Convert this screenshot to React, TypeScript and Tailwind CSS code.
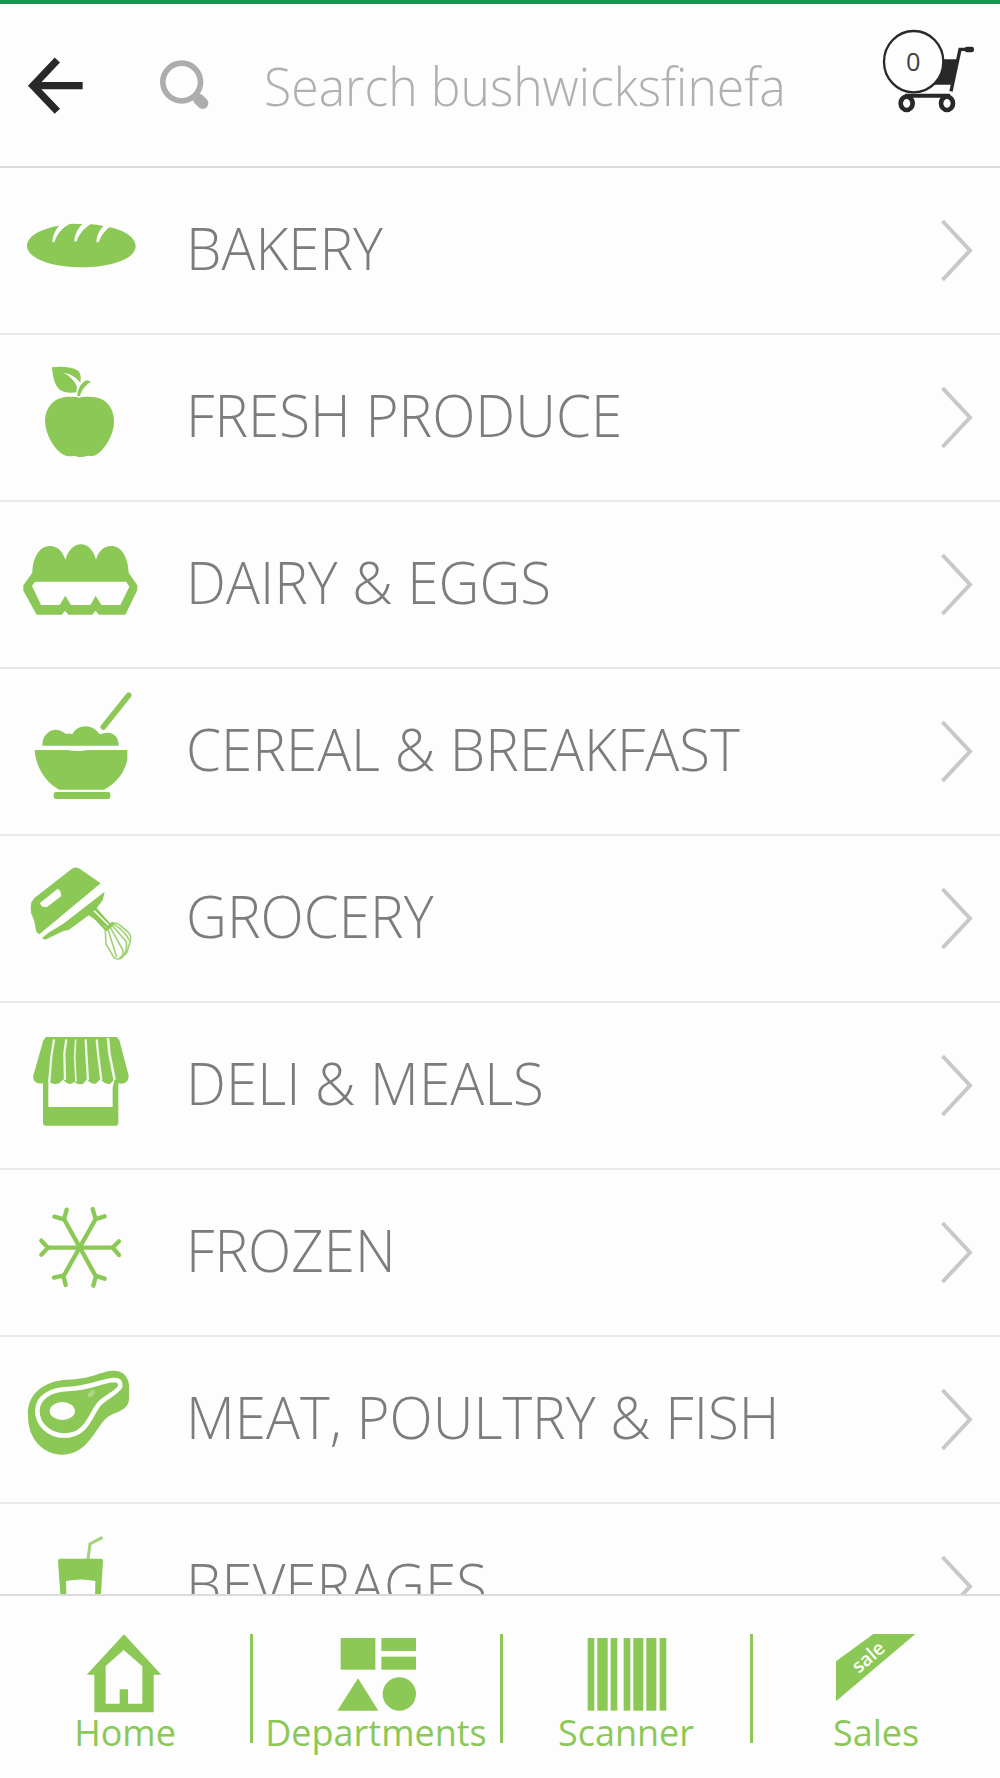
import type { ReactNode } from 'react';

interface Department {
  name: string;
  viewBox: string;
  icon: ReactNode;
}

const departments: Department[] = [
  {
    name: 'BAKERY',
    viewBox: '0 -66 480 495',
    icon: (
      <path
        fill="currentColor"
        d="M81 168C81 140 120 116 178 107C166 119 158 136 157 155Q161 160 165 152C171 132 188 112 209 102Q228 100 247 103C234 114 224 133 223 153Q227 158 231 152C237 132 254 114 271 103Q291 104 310 108C298 121 290 137 289 155Q294 160 298 152C304 136 315 122 328 112C376 121 407 144 407 169C407 206 334 232 244 232C154 232 81 204 81 168Z"
      />
    ),
  },
  {
    name: 'FRESH PRODUCE',
    viewBox: '0 435 480 495',
    icon: (
      <>
        <path
          fill="currentColor"
          d="M156 532C182 528 212 531 231 540C242 547 244 560 241 578C228 562 213 551 190 548C210 558 225 574 231 590L229 607C206 610 186 606 176 596C162 581 158 557 156 532Z"
        />
        <path fill="currentColor" d="M232 618C233 594 247 573 263 571L273 575C257 584 245 599 240 618Z" />
        <path
          fill="currentColor"
          d="M238 623C252 619 284 618 304 627C330 640 343 666 342 697C341 735 314 782 286 796C276 801 268 796 260 798C249 802 234 802 222 797C212 799 203 800 192 795C163 779 137 735 135 695C135 661 151 638 174 627C194 618 222 620 238 623Z"
        />
      </>
    ),
  },
  {
    name: 'DAIRY & EGGS',
    viewBox: '0 -54 480 495',
    icon: (
      <path
        fill="currentColor"
        fillRule="evenodd"
        d="M97 158C98 112 118 78 150 78C172 78 187 93 196 119C205 90 223 73 243 73C263 73 280 90 288 119C296 93 312 78 333 78C363 78 384 108 386 158L412 196V210L376 284H297L287 272L277 284H205L195 272L185 284H110L70 212V196ZM105 185L96 198L123 255H179L196 227L213 255H271L287 227L304 255H361L388 200L379 185Z"
      />
    ),
  },
  {
    name: 'CEREAL & BREAKFAST',
    viewBox: '0 447 480 495',
    icon: (
      <>
        <path stroke="currentColor" strokeWidth="17" strokeLinecap="round" d="M310 621L386 526" />
        <path
          fill="currentColor"
          d="M127 677C126 650 144 629 168 629C181 629 190 636 198 642Q208 639 217 643C224 628 239 619 256 619C275 619 288 628 299 643Q312 638 323 638C344 638 357 655 356 677Z"
        />
        <path
          fill="currentColor"
          d="M104 690H200Q232 696 264 690H382V717C376 754 350 790 312 809H178C138 789 107 741 104 690Z"
        />
        <rect fill="currentColor" x="161" y="816" width="170" height="21" rx="7" />
      </>
    ),
  },
  {
    name: 'GROCERY',
    viewBox: '0 -12 480 495',
    icon: (
      <>
        <path
          fill="currentColor"
          fillRule="evenodd"
          d="M94 187L103 174L216 86Q228 78 240 87L302 130L118 283L109 276L103 244L93 218Q91 200 94 187ZM119 190L173 146L181 153L184 168L141 201L127 200Z"
        />
        <path
          fill="currentColor"
          d="M314 155L308 181L290 204L332 252L322 264L266 226L206 270L190 273L136 299L126 294L150 275L190 251Z"
        />
        <path stroke="#fdfdfd" strokeWidth="4" d="M282 212L328 258" />
        <path stroke="currentColor" strokeWidth="7" d="M273 221L320 271" />
        <g stroke="currentColor" strokeOpacity="0.8" strokeWidth="5" fill="none">
          <path d="M316 270L336 248L354 251L384 276Q395 286 391 303L381 336L364 355Q352 360 342 353L318 312Z" />
          <path d="M324 268L350 352" />
          <path d="M331 262L369 331Q370 348 358 354" />
          <path d="M337 257L379 305Q382 329 372 345" />
          <path d="M343 253Q382 280 387 302" />
        </g>
        <path stroke="currentColor" strokeWidth="9" d="M318 270L340 250" />
      </>
    ),
  },
  {
    name: 'DELI & MEALS',
    viewBox: '0 489 480 495',
    icon: (
      <>
        <path
          fill="currentColor"
          d="M138 591H350L358 600L386 707Q386 729 366 731L355 730V850Q355 857 348 857H136Q129 857 129 850V730Q102 734 99 710L130 601Z"
        />
        <path
          fill="#fdfdfd"
          d="M145 714L150 727Q162 736 178 730L190 718Q198 732 212 732L223 726Q235 736 249 731L261 718Q273 734 287 731L302 717Q315 735 330 731L344 718L338 742V801H145Z"
        />
        <g stroke="#fdfdfd" strokeOpacity="0.85" strokeWidth="7" fill="none">
          <path d="M162 598L154 650L148 725" />
          <path d="M199 598L193 640L195 720" />
          <path d="M227 598L224 650L228 725" strokeWidth="5" />
          <path d="M257 598L259 640L264 720" />
          <path d="M290 598L294 640L304 720" />
          <path d="M324 594L328 640L344 720" strokeWidth="8" />
        </g>
      </>
    ),
  },
  {
    name: 'FROZEN',
    viewBox: '0 -30 480 495',
    icon: (
      <g stroke="currentColor" strokeWidth="13" strokeLinecap="round" fill="none">
        <path d="M144 203H338" />
        <path d="M192 117L287 288" />
        <path d="M287 117L191 288" />
        <path d="M124 182L144 203L124 224" />
        <path d="M357 184L338 203L357 225" />
        <path d="M163 110L192 118L200 89" />
        <path d="M278 87L287 117L314 109" />
        <path d="M162 293L190 287L197 315" />
        <path d="M280 317L288 288L314 296" />
      </g>
    ),
  },
  {
    name: 'MEAT, POULTRY & FISH',
    viewBox: '0 471 480 495',
    icon: (
      <>
        <path
          fill="currentColor"
          d="M84 705C80 643 132 602 202 599C282 596 302 572 343 572C370 572 387 592 387 618V655C387 693 348 694 322 712C287 739 266 824 187 824C132 824 83 780 84 705Z"
        />
        <path
          fill="none"
          stroke="#fdfdfd"
          strokeWidth="14"
          d="M112 692C113 651 152 629 203 627C272 625 303 602 343 600C356 600 362 606 361 618C356 637 314 651 295 675C270 707 259 767 193 767C145 767 112 731 112 692Z"
        />
        <ellipse fill="#fdfdfd" cx="187" cy="693" rx="38" ry="27" />
        <path stroke="#fdfdfd" strokeOpacity="0.3" strokeWidth="14" strokeLinecap="round" d="M270 645L278 637" />
      </>
    ),
  },
  {
    name: 'BEVERAGES',
    viewBox: '0 42 480 495',
    icon: (
      <>
        <path stroke="currentColor" strokeOpacity="0.8" strokeWidth="9" fill="none" d="M264 208L270 162L307 142" />
        <path
          fill="currentColor"
          fillRule="evenodd"
          d="M180 206H303Q309 206 309 212L297 410H188L174 214Q174 206 180 206ZM198 273Q242 264 286 273L284 390H201Z"
        />
      </>
    ),
  },
];

const tabs: Department[] = [
  {
    name: 'Home',
    viewBox: '0 432 750 240',
    icon: (
      <path
        fill="currentColor"
        fillRule="evenodd"
        d="M372 433L484 554H461V667H283V554H260ZM371 480L317 528V641H359V598H384V641H427V529Z"
      />
    ),
  },
  {
    name: 'Departments',
    viewBox: '750 432 750 240',
    icon: (
      <g fill="currentColor">
        <rect x="1022" y="444" width="104" height="95" />
        <rect x="1144" y="444" width="104" height="39" />
        <rect x="1144" y="500" width="104" height="39" />
        <path d="M1074 565L1135 662H1012Z" />
        <circle cx="1198" cy="612" r="50" />
      </g>
    ),
  },
  {
    name: 'Scanner',
    viewBox: '0 432 750 240',
    icon: (
      <g fill="currentColor">
        <rect x="263" y="444" width="20" height="218" />
        <rect x="292" y="444" width="31" height="218" />
        <rect x="332" y="444" width="20" height="218" />
        <rect x="371" y="444" width="20" height="218" />
        <rect x="400" y="444" width="30" height="218" />
        <rect x="439" y="444" width="30" height="218" />
        <rect x="479" y="444" width="20" height="218" />
      </g>
    ),
  },
  {
    name: 'Sales',
    viewBox: '750 432 750 240',
    icon: (
      <>
        <path fill="currentColor" d="M1120 432H1246L1008 634V514Z" />
        <text
          x="1076"
          y="552"
          transform="rotate(-41 1076 552)"
          fill="#fdfdfd"
          className="font-['Open_Sans'] text-[57px] font-semibold"
        >
          sale
        </text>
      </>
    ),
  },
];

function Header() {
  return (
    <header className="flex h-[168px] shrink-0 border-t-[4px] border-b-2 border-t-[#1c9550] border-b-[#dadada]">
      <svg className="h-[162px] w-[250px] shrink-0" viewBox="0 12 750 486" fill="none">
        <path stroke="#292929" strokeWidth="22" d="M248 257H105" />
        <path stroke="#292929" strokeWidth="22" d="M172 180L99 257L172 334" />
        <circle cx="545" cy="246" r="56.5" stroke="#adadad" strokeWidth="17" />
        <path stroke="#adadad" strokeWidth="34" strokeLinecap="round" d="M596 298L608 310" />
      </svg>
      <input
        type="text"
        placeholder="Search bushwicksfinefa"
        className="ml-[14px] w-[580px] origin-left scale-x-[0.942] bg-transparent pt-px text-[53px] font-light text-[#333] outline-none placeholder:text-[#b0b0b0]"
      />
      <svg className="h-[162px] w-[156px] shrink-0" viewBox="1032 12 468 486" fill="none">
        <path fill="#292929" d="M1320 178H1374L1353 254H1300Z" />
        <path stroke="#292929" strokeWidth="10" d="M1408 148H1380L1353 274" />
        <rect x="1394" y="140" width="28" height="17" rx="7" fill="#292929" />
        <path stroke="#292929" strokeWidth="12" d="M1215 287H1350" />
        <ellipse cx="1220" cy="310" rx="18" ry="20" stroke="#292929" strokeWidth="14" />
        <ellipse cx="1341" cy="310" rx="18" ry="20" stroke="#292929" strokeWidth="14" />
        <ellipse cx="1241" cy="185" rx="89" ry="92" fill="#fdfdfd" stroke="#292929" strokeWidth="7" />
        <text x="1240" y="212" textAnchor="middle" fill="#404040" className="font-['Open_Sans'] text-[76px]">
          0
        </text>
      </svg>
    </header>
  );
}

function DepartmentRow({ department }: { department: Department }) {
  return (
    <li className="flex h-[167px] shrink-0 items-center border-b-2 border-[#e8e8e8]">
      <svg className="h-[165px] w-[160px] shrink-0 text-[#8bc856]" viewBox={department.viewBox} fill="none">
        {department.icon}
      </svg>
      <span className="ml-[26px] flex-1 origin-left scale-x-[0.975] pb-[7px] text-[58px] font-light whitespace-nowrap text-[#7c7c7c]">
        {department.name}
      </span>
      <svg className="mr-[24px] h-[64px] w-[36px] shrink-0" viewBox="0 0 36 64" fill="none">
        <path stroke="#c8c8c8" strokeWidth="4" d="M2.5 2L30 31.5L2.5 61" />
      </svg>
    </li>
  );
}

export default function App() {
  return (
    <div className="flex h-[1778px] w-[1000px] flex-col overflow-hidden bg-[#fdfdfd] font-['Open_Sans',sans-serif]">
      <Header />

      <ul className="flex min-h-0 flex-1 flex-col overflow-hidden">
        {departments.map(department => (
          <DepartmentRow key={department.name} department={department} />
        ))}
      </ul>

      <nav className="flex h-[184px] shrink-0 border-t-2 border-[#dadada] pt-[38px] text-[#8bc856]">
        {tabs.map((tab, index) => (
          <div key={tab.name} className="flex w-[250px] shrink-0">
            <div className={index > 0 ? 'h-[109px] w-[3px] bg-[#8bc856]' : 'hidden'} />
            <button className={index > 0 ? '-ml-[3px] flex w-[250px] flex-col items-center pl-[2px]' : 'flex w-[250px] flex-col items-center'}>
              <svg className={index > 0 ? '-ml-[2px] h-[80px] w-[250px] shrink-0' : 'h-[80px] w-[250px] shrink-0'} viewBox={tab.viewBox} fill="none">
                {tab.icon}
              </svg>
              <span className="-mt-[5px] text-[36px] leading-[48px]">{tab.name}</span>
            </button>
          </div>
        ))}
      </nav>
    </div>
  );
}
